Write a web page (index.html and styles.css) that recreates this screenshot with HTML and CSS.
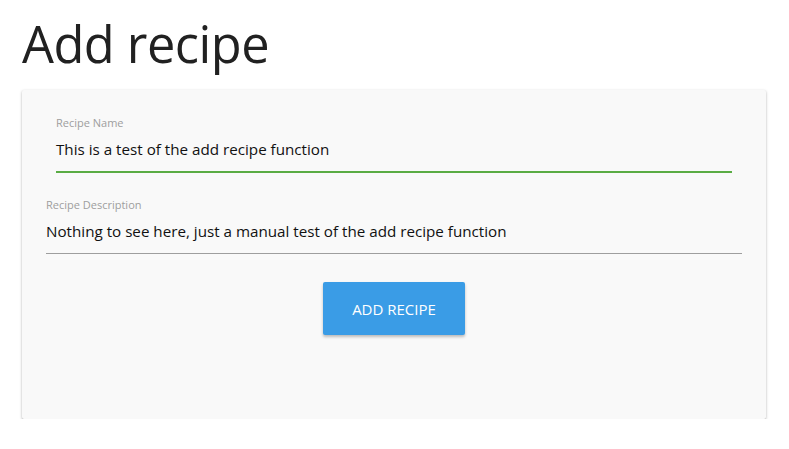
FILE: index.html
```html
<!DOCTYPE html>
<html>
<head>
<meta charset="utf-8">
<link rel="stylesheet" href="styles.css">
</head>
<body>
<h1 class="title">Add recipe</h1>
<form class="card">
  <div class="field field-name">
    <label class="label">Recipe Name</label>
    <div class="value">This is a test of the add recipe function</div>
  </div>
  <div class="field field-desc">
    <label class="label">Recipe Description</label>
    <div class="value">Nothing to see here, just a manual test of the add recipe function</div>
  </div>
  <div class="actions">
    <button type="button" class="btn">ADD RECIPE</button>
  </div>
</form>
</body>
</html>
```
FILE: styles.css
```css
html, body {
  margin: 0;
  padding: 0;
  background: #ffffff;
}
body {
  font-family: "Open Sans", "Noto Sans", sans-serif;
  color: #212121;
  padding: 0 23px 0 22px;
}
.title {
  margin: 0;
  height: 90px;
  font-weight: 400;
  font-size: 50.5px;
  line-height: 88px;
  color: #212121;
  letter-spacing: -0.5px;
}
.card {
  display: flex;
  flex-direction: column;
  background: #f9f9f9;
  border-radius: 2px;
  box-shadow: 0 1px 3px rgba(0,0,0,0.28), 0 1px 1px rgba(0,0,0,0.1);
  height: 329px;
  padding: 0 24px;
  box-sizing: border-box;
}
.field {
  display: flex;
  flex-direction: column;
}
.field-name {
  margin: 0 10px;
  padding-top: 25px;
  border-bottom: 2px solid #5aac44;
}
.field-desc {
  padding-top: 24px;
  border-bottom: 1px solid #9e9e9e;
}
.label {
  font-size: 11px;
  line-height: 16px;
  color: #9e9e9e;
}
.value {
  font-size: 15.2px;
  line-height: 20px;
  padding: 8px 0 12px;
  color: #111;
}
.actions {
  display: flex;
  justify-content: center;
  padding-top: 28px;
}
.btn {
  width: 142px;
  height: 53px;
  border: none;
  border-radius: 2px;
  background: #3a9ce6;
  color: #ffffff;
  font-family: "Open Sans", "Noto Sans", sans-serif;
  font-size: 15px;
  box-shadow: 0 2px 3px rgba(0,0,0,0.25);
}
```
